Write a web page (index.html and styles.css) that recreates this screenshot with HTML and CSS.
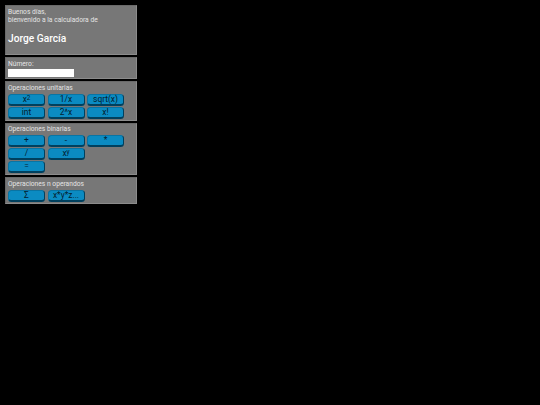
FILE: index.html
```html
<!DOCTYPE html>
<html lang="es">
<head>
<meta charset="utf-8">
<title>Calculadora</title>
<link rel="stylesheet" href="styles.css">
</head>
<body>
<main class="calc">
  <section class="panel greet">
    <p class="hello">Buenos días,<br>bienvenido a la calculadora de</p>
    <h1 class="name">Jorge García</h1>
  </section>
  <section class="panel number">
    <label class="label" for="n">Número:</label>
    <input class="field" id="n" type="text">
  </section>
  <section class="panel">
    <h2 class="label">Operaciones unitarias</h2>
    <div class="keys">
      <button class="key">x<sup>2</sup></button>
      <button class="key">1/x</button>
      <button class="key">sqrt(x)</button>
      <button class="key">int</button>
      <button class="key">2^x</button>
      <button class="key">x!</button>
    </div>
  </section>
  <section class="panel">
    <h2 class="label">Operaciones binarias</h2>
    <div class="keys">
      <button class="key">+</button>
      <button class="key">-</button>
      <button class="key">*</button>
      <button class="key">/</button>
      <button class="key">x<sup>y</sup></button>
      <button class="key wrap">=</button>
    </div>
  </section>
  <section class="panel">
    <h2 class="label">Operaciones n operandos</h2>
    <div class="keys">
      <button class="key">Σ</button>
      <button class="key">x*y*z...</button>
    </div>
  </section>
</main>
</body>
</html>
```
FILE: styles.css
```css
html, body { margin: 0; background: #000; }
body { padding: 5px; font-family: Roboto, "Liberation Sans", sans-serif; color: #e4e4e4; }
.calc { width: 132px; display: flex; flex-direction: column; gap: 2px; }
.panel {
  box-sizing: border-box;
  background: #777;
  border: 1px solid #8c8c8c;
  border-left-color: #6a6a6a;
  border-top-color: #6a6a6a;
  padding: 1.5px 2px 1px;
}
.greet { height: 50px; padding-top: 1.5px; }
.hello { margin: 0; font-size: 6.7px; line-height: 8px; }
.name { margin: 8px 0 0; font-size: 10.2px; line-height: 13px; font-weight: 500; color: #fff; }
.number { height: 22px; }
.label { display: block; margin: 0; font-size: 6.7px; line-height: 8.5px; font-weight: 400; }
.field { display: block; box-sizing: border-box; width: 66px; height: 8px; margin-top: 1px; padding: 0; border: 0; background: #fff; }
.keys { display: grid; grid-template-columns: repeat(3, 37px); column-gap: 2.5px; row-gap: 1px; margin-top: 1.5px; }
.key {
  box-sizing: border-box;
  height: 12px;
  padding: 0;
  border: 1px solid #0a74a3;
  border-right-color: #00405e;
  border-bottom: 2px solid #00405e;
  border-radius: 3.5px;
  background: #0b8bc2;
  color: #03202f;
  font-family: inherit;
  font-size: 8.4px;
  line-height: 9px;
}
.wrap { grid-column: 1; }
.key sup { font-size: 6.4px; line-height: 0; vertical-align: 2.5px; }
```
